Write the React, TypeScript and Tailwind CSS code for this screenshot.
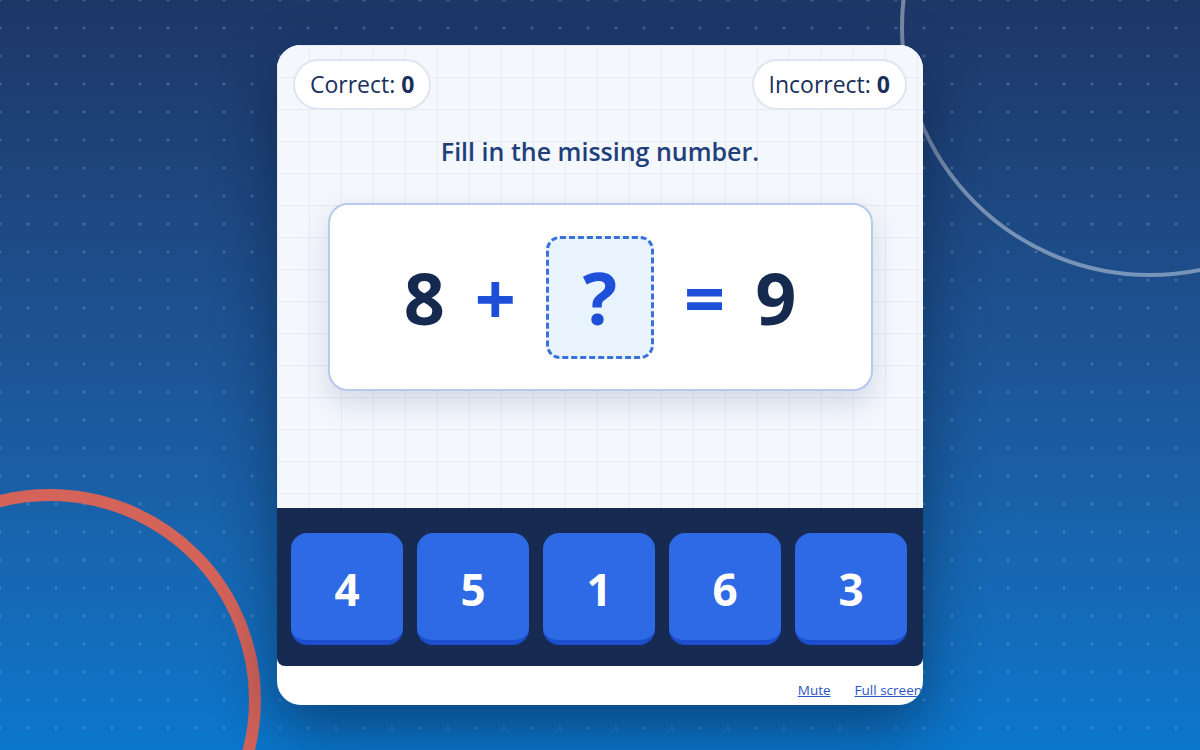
import React from 'react'

const answers = [4, 5, 1, 6, 3]

function ScorePill({ label, value }: { label: string; value: number }) {
  return (
    <div className="h-[51px] px-[15px] flex items-center rounded-full bg-white border-2 border-[#dfe6f1] text-[23px] font-medium text-[#1b2f5c]">
      <span>{label}:&nbsp;</span>
      <span className="font-bold">{value}</span>
    </div>
  )
}

export default function App() {
  return (
    <div
      className="relative w-[1200px] h-[750px] overflow-hidden flex items-center justify-center bg-gradient-to-b from-[#1d3766] to-[#0a77cc]"
      style={{ fontFamily: '"Open Sans", "Noto Sans", sans-serif' }}
    >
      {/* dot pattern */}
      <div className="absolute inset-0 bg-[radial-gradient(circle,rgba(140,170,220,0.35)_1.2px,transparent_1.8px)] bg-size-[28px_28px] bg-[position:14px_14px]" />
      {/* decorative rings */}
      <div className="absolute left-[900px] top-[-223px] w-[500px] h-[500px] rounded-full border-[4px] border-white/40" />
      <div className="absolute left-[-161px] top-[489px] w-[422px] h-[422px] rounded-full border-[12px] border-[#d4635a]" />

      <div className="relative z-10 w-[646px] h-[660px] rounded-[24px] overflow-hidden bg-white flex flex-col shadow-[0_24px_60px_rgba(5,15,40,0.45)]">
        <div className="flex-1 flex flex-col bg-[#f4f7fc] bg-[linear-gradient(#e5eaf3_1px,transparent_1px),linear-gradient(90deg,#e5eaf3_1px,transparent_1px)] bg-size-[32px_32px] bg-[position:0_0]">
          <div className="flex justify-between pt-[14px] px-[16px]">
            <ScorePill label="Correct" value={0} />
            <ScorePill label="Incorrect" value={0} />
          </div>

          <h1 className="mt-[23px] text-center text-[25px] leading-[36px] font-semibold text-[#1f3f7b]">
            Fill in the missing number.
          </h1>

          <div className="mt-[34px] mx-auto w-[545px] h-[188px] rounded-[20px] bg-white border-2 border-[#b7c9ec] shadow-[0_12px_28px_rgba(30,60,120,0.16)] flex items-center justify-center gap-[30px] font-bold text-[72px] leading-none">
            <span className="text-[#162a4f]">8</span>
            <span className="text-[#1d4fd8]">+</span>
            <div className="w-[108px] h-[123px] rounded-[14px] border-[3px] border-dashed border-[#3a70dc] bg-[#e8f3fe] flex items-center justify-center text-[#1d4fd8]">
              ?
            </div>
            <span className="text-[#1d4fd8]">=</span>
            <span className="text-[#162a4f]">9</span>
          </div>
        </div>

        <div className="h-[158px] bg-[#172a51] rounded-b-[8px] flex gap-[14px] px-[14px] pt-[25px]">
          {answers.map((n) => (
            <button
              key={n}
              className="w-[112px] h-[112px] rounded-[16px] bg-[#2e6ae5] border-b-[5px] border-[#1c4ecf] text-white font-bold text-[44px] flex items-center justify-center pt-[4px]"
            >
              {n}
            </button>
          ))}
        </div>

        <div className="h-[39px] flex items-center justify-end gap-[24px] pt-[10px] pr-[1px] text-[13.5px] text-[#2a56c6]">
          <a href="#" className="underline">Mute</a>
          <a href="#" className="underline whitespace-nowrap">Full screen</a>
        </div>
      </div>
    </div>
  )
}
